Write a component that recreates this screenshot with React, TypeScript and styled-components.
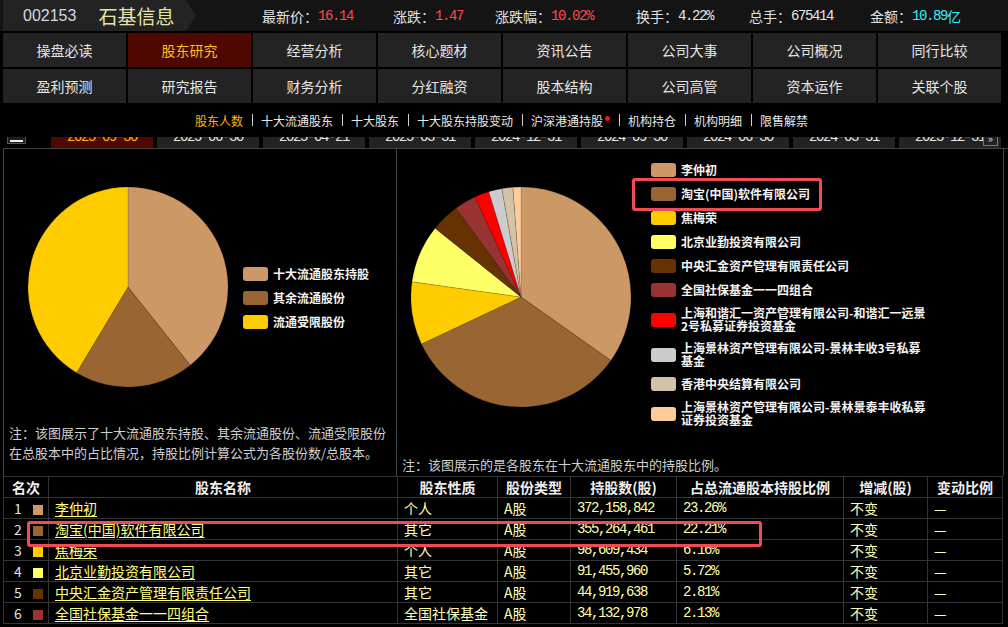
import React from "react";
import styled, { createGlobalStyle } from "styled-components";

const CJK = `"Noto Sans CJK SC", "Noto Sans", sans-serif`;
const MONO = `"Liberation Mono", "Noto Sans CJK SC", monospace`;

const GlobalStyle = createGlobalStyle`
  html, body { margin: 0; padding: 0; background: #000; }
  body { font-family: ${CJK}; color: #ddd; }
  * { box-sizing: border-box; }
`;

const Page = styled.div`
  position: relative;
  width: 1008px;
  height: 627px;
  overflow: hidden;
  background: #000;
`;

/* ---------- top bar ---------- */
const TopBar = styled.div`
  display: flex;
  align-items: center;
  height: 31px;
  margin-bottom: 2px;
  background: #141414;
`;
const Brand = styled.div`
  display: flex;
  align-items: center;
  width: 193px;
  height: 100%;
  margin-left: 3px;
  padding-left: 20px;
  background: #232323;
  clip-path: polygon(0 0, calc(100% - 10px) 0, 100% 50%, calc(100% - 10px) 100%, 0 100%);
`;
const Code = styled.span`
  font-family: "Liberation Sans", sans-serif;
  font-size: 16px;
  color: #d6d8e6;
`;
const StockName = styled.span`
  margin-left: 22px;
  font-size: 19px;
  color: #e9e3a6;
`;
const Stats = styled.div`
  display: flex;
  align-items: center;
  margin-left: 66px;
`;
const Stat = styled.div<{ $w: number }>`
  display: flex;
  align-items: center;
  width: ${(p) => p.$w}px;
  font-size: 14px;
  color: #e2e2e2;
  white-space: nowrap;
`;
const StatValue = styled.span<{ $c: string }>`
  font-family: ${MONO};
  font-size: 14px;
  letter-spacing: -1.4px;
  color: ${(p) => p.$c};
`;
const Yi = styled.span<{ $c: string }>`
  font-size: 14px;
  color: ${(p) => p.$c};
`;

/* ---------- nav grid ---------- */
const NavGrid = styled.div`
  display: grid;
  grid-template-columns: repeat(8, 123px);
  grid-auto-rows: 34px;
  gap: 2px;
  margin-left: 3px;
`;
const NavCell = styled.div<{ $active?: boolean }>`
  display: flex;
  align-items: center;
  justify-content: center;
  background: ${(p) => (p.$active ? "#4e0800" : "#232323")};
  color: ${(p) => (p.$active ? "#ffbf1a" : "#e6e6e6")};
  font-size: 14px;
`;

/* ---------- sub nav ---------- */
const SubNav = styled.div`
  display: flex;
  align-items: center;
  height: 34px;
  padding-left: 195px;
  font-size: 12px;
`;
const SubItem = styled.span<{ $active?: boolean }>`
  position: relative;
  color: ${(p) => (p.$active ? "#ffb400" : "#e8e8e8")};
`;
const Sep = styled.span`
  display: inline-block;
  width: 1px;
  height: 12px;
  margin: 0 8px 0 9px;
  background: #d0d0d0;
`;
const RedDot = styled.span`
  display: inline-block;
  width: 5px;
  height: 5px;
  margin-left: 2px;
  border-radius: 50%;
  background: #ff1010;
  vertical-align: 5px;
`;

/* ---------- date tabs (scrolled, partly clipped) ---------- */
const TabsClip = styled.div`
  position: relative;
  height: 11px;
  overflow: hidden;
`;
const TabsRow = styled.div`
  display: flex;
  align-items: flex-start;
  gap: 4px;
  height: 22px;
  margin-top: -11px;
  padding-left: 7px;
`;
const CollapseBtn = styled.div`
  position: relative;
  width: 19px;
  height: 18px;
  margin-right: 21px;
  background: #1e1e1e;
  border: 1px solid #555;
  &::after {
    content: "";
    position: absolute;
    left: 2px;
    right: 2px;
    top: 13px;
    height: 2px;
    background: #eee;
  }
`;
const DateTab = styled.div<{ $active?: boolean }>`
  flex: none;
  width: 102px;
  height: 22px;
  line-height: 22px;
  text-align: center;
  background: ${(p) => (p.$active ? "#4e0800" : "#232323")};
  color: ${(p) => (p.$active ? "#ffb400" : "#e6e6e6")};
  font-family: ${MONO};
  font-size: 14px;
  letter-spacing: -1.4px;
`;
const MoreBtn = styled.div`
  position: absolute;
  right: 10px;
  top: -4px;
  width: 15px;
  height: 13px;
  border: 1px solid #777;
  background: #222;
  color: #ddd;
  font-size: 11px;
  line-height: 9px;
  text-align: center;
`;

/* ---------- charts ---------- */
const Charts = styled.div`
  display: flex;
  height: 328px;
  margin-left: 3px;
  border-top: 1px solid #444;
`;
const Panel = styled.div<{ $w: number; $left?: boolean }>`
  display: flex;
  flex-direction: column;
  width: ${(p) => p.$w}px;
  border-right: 1px solid #444;
  border-left: ${(p) => (p.$left ? "1px solid #444" : "none")};
`;
const PieRow = styled.div`
  display: flex;
  align-items: flex-start;
`;
const PieBox = styled.svg<{ $ml: number }>`
  flex: none;
  margin-left: ${(p) => p.$ml}px;
  margin-top: 38px;
`;
const Legend = styled.div<{ $ml: number; $mt: number }>`
  display: flex;
  flex-direction: column;
  gap: 10px;
  margin-left: ${(p) => p.$ml}px;
  margin-top: ${(p) => p.$mt}px;
`;
const LegendItem = styled.div`
  display: flex;
  align-items: center;
`;
const Swatch = styled.span<{ $c: string }>`
  flex: none;
  width: 25px;
  height: 14px;
  border-radius: 3px;
  background: ${(p) => p.$c};
`;
const LegendText = styled.span`
  margin-left: 5px;
  font-size: 12px;
  line-height: 12.5px;
  font-weight: 700;
  color: #f4f4f4;
  text-shadow: 0 0 1px #000;
  white-space: nowrap;
`;
const Note = styled.div<{ $pb: number }>`
  margin-top: auto;
  padding: 0 0 ${(p) => p.$pb}px 5px;
  font-size: 13px;
  line-height: 20px;
  color: #cfcfcf;
  white-space: nowrap;
`;

/* ---------- table ---------- */
const Table = styled.table`
  border-collapse: collapse;
  table-layout: fixed;
  width: 999px;
  margin-left: 3px;
  font-size: 14px;
  th, td {
    border: 1px solid #343434;
    padding: 0 0 0 6px;
    height: 21px;
    line-height: 20px;
    white-space: nowrap;
    overflow: hidden;
    text-align: left;
  }
  th {
    padding: 0;
    text-align: center;
    font-weight: 700;
    color: #f0f0f0;
  }
`;
const RankCell = styled.td`
  color: #e0e0e0;
  && { padding-left: 10px; }
`;
const RankSwatch = styled.span<{ $c: string }>`
  display: inline-block;
  width: 10px;
  height: 10px;
  margin-left: 11px;
  vertical-align: -1px;
  background: ${(p) => p.$c};
`;
const NameLink = styled.a`
  color: #ffff80;
  text-decoration: underline;
  text-underline-offset: 2px;
`;
const PlainCell = styled.td`
  color: #ffffb8;
`;
const NumCell = styled.td`
  color: #ffffa8;
  font-family: ${MONO};
  letter-spacing: -1.4px;
`;

/* ---------- annotation overlays ---------- */
const Highlight = styled.div`
  position: absolute;
  border: 3px solid #f04b55;
  border-radius: 3px;
  pointer-events: none;
`;

/* ---------- data ---------- */
const stats = [
  { label: "最新价：", value: "16.14", color: "#ff4a4a", w: 131 },
  { label: "涨跌：", value: "1.47", color: "#ff4a4a", w: 102 },
  { label: "涨跌幅：", value: "10.02%", color: "#ff4a4a", w: 141 },
  { label: "换手：", value: "4.22%", color: "#e6e6e6", w: 113 },
  { label: "总手：", value: "675414", color: "#e6e6e6", w: 121 },
];

const navItems = [
  "操盘必读", "股东研究", "经营分析", "核心题材", "资讯公告", "公司大事", "公司概况", "同行比较",
  "盈利预测", "研究报告", "财务分析", "分红融资", "股本结构", "公司高管", "资本运作", "关联个股",
];

const subItems = ["股东人数", "十大流通股东", "十大股东", "十大股东持股变动", "沪深港通持股", "机构持仓", "机构明细", "限售解禁"];

const dates = [
  "2025-09-30", "2025-06-30", "2025-04-21", "2025-03-31", "2024-12-31",
  "2024-09-30", "2024-06-30", "2024-03-31", "2023-12-31",
];

const leftSlices = [
  { name: "十大流通股东持股", value: 39.3, color: "#cc9966" },
  { name: "其余流通股份", value: 19.3, color: "#996633" },
  { name: "流通受限股份", value: 41.4, color: "#ffcc00" },
];

const holders = [
  { lines: ["李仲初"], value: 23.26, color: "#cc9966" },
  { lines: ["淘宝(中国)软件有限公司"], value: 22.21, color: "#996633" },
  { lines: ["焦梅荣"], value: 6.16, color: "#ffcc00" },
  { lines: ["北京业勤投资有限公司"], value: 5.72, color: "#ffff66" },
  { lines: ["中央汇金资产管理有限责任公司"], value: 2.81, color: "#663300" },
  { lines: ["全国社保基金一一四组合"], value: 2.13, color: "#993333" },
  { lines: ["上海和谐汇一资产管理有限公司-和谐汇一远景", "2号私募证券投资基金"], value: 1.43, color: "#ff0000" },
  { lines: ["上海景林资产管理有限公司-景林丰收3号私募", "基金"], value: 1.3, color: "#cccccc" },
  { lines: ["香港中央结算有限公司"], value: 1.08, color: "#d3c3a8" },
  { lines: ["上海景林资产管理有限公司-景林景泰丰收私募", "证券投资基金"], value: 0.78, color: "#ffcc99" },
];

const rows = [
  { name: "李仲初", kind: "个人", type: "A股", shares: "372,158,842", pct: "23.26%", color: "#cc9966" },
  { name: "淘宝(中国)软件有限公司", kind: "其它", type: "A股", shares: "355,264,461", pct: "22.21%", color: "#996633" },
  { name: "焦梅荣", kind: "个人", type: "A股", shares: "98,609,434", pct: "6.16%", color: "#ffcc00" },
  { name: "北京业勤投资有限公司", kind: "其它", type: "A股", shares: "91,455,960", pct: "5.72%", color: "#ffff66" },
  { name: "中央汇金资产管理有限责任公司", kind: "其它", type: "A股", shares: "44,919,638", pct: "2.81%", color: "#663300" },
  { name: "全国社保基金一一四组合", kind: "全国社保基金", type: "A股", shares: "34,132,978", pct: "2.13%", color: "#993333" },
];

const columns = [
  { title: "名次", w: 45 },
  { title: "股东名称", w: 349 },
  { title: "股东性质", w: 100 },
  { title: "股份类型", w: 73 },
  { title: "持股数(股)", w: 106 },
  { title: "占总流通股本持股比例", w: 167 },
  { title: "增减(股)", w: 84 },
  { title: "变动比例", w: 75 },
];

function Pie({ data, size, ml }: { data: { value: number; color: string }[]; size: number; ml: number }) {
  const r = size / 2;
  const total = data.reduce((s, d) => s + d.value, 0);
  let acc = 0;
  const pt = (a: number) => [r + r * Math.sin(a), r - r * Math.cos(a)];
  return (
    <PieBox $ml={ml} width={size} height={size} viewBox={`0 0 ${size} ${size}`}>
      {data.map((d, i) => {
        const a0 = (acc / total) * Math.PI * 2;
        acc += d.value;
        const a1 = (acc / total) * Math.PI * 2;
        const [x0, y0] = pt(a0);
        const [x1, y1] = pt(a1);
        const large = a1 - a0 > Math.PI ? 1 : 0;
        return (
          <path
            key={i}
            d={`M${r},${r} L${x0},${y0} A${r},${r} 0 ${large} 1 ${x1},${y1} Z`}
            fill={d.color}
            stroke="rgba(60,40,20,0.35)"
            strokeWidth={0.5}
          />
        );
      })}
    </PieBox>
  );
}

export default function App() {
  return (
    <Page>
      <GlobalStyle />
      <TopBar>
        <Brand>
          <Code>002153</Code>
          <StockName>石基信息</StockName>
        </Brand>
        <Stats>
          {stats.map((s) => (
            <Stat key={s.label} $w={s.w}>
              {s.label}
              <StatValue $c={s.color}>{s.value}</StatValue>
            </Stat>
          ))}
          <Stat $w={120}>
            金额：<StatValue $c="#33f0ff">10.89</StatValue>
            <Yi $c="#33f0ff">亿</Yi>
          </Stat>
        </Stats>
      </TopBar>

      <NavGrid>
        {navItems.map((n) => (
          <NavCell key={n} $active={n === "股东研究"}>
            {n}
          </NavCell>
        ))}
      </NavGrid>

      <SubNav>
        {subItems.map((s, i) => (
          <React.Fragment key={s}>
            {i > 0 && <Sep />}
            <SubItem $active={i === 0}>
              {s}
              {s === "沪深港通持股" && <RedDot />}
            </SubItem>
          </React.Fragment>
        ))}
      </SubNav>

      <TabsClip>
        <TabsRow>
          <CollapseBtn />
          {dates.map((d, i) => (
            <DateTab key={d} $active={i === 0}>
              {d}
            </DateTab>
          ))}
        </TabsRow>
        <MoreBtn>»</MoreBtn>
      </TabsClip>

      <Charts>
        <Panel $w={394} $left>
          <PieRow>
            <Pie data={leftSlices} size={200} ml={24} />
            <Legend $ml={15} $mt={118}>
              {leftSlices.map((s) => (
                <LegendItem key={s.name}>
                  <Swatch $c={s.color} />
                  <LegendText>{s.name}</LegendText>
                </LegendItem>
              ))}
            </Legend>
          </PieRow>
          <Note $pb={13}>
            注：该图展示了十大流通股东持股、其余流通股份、流通受限股份
            <br />
            在总股本中的占比情况，持股比例计算公式为各股份数/总股本。
          </Note>
        </Panel>
        <Panel $w={607}>
          <PieRow>
            <Pie data={holders} size={220} ml={14} />
            <Legend $ml={20} $mt={14}>
              {holders.map((h) => (
                <LegendItem key={h.lines[0]}>
                  <Swatch $c={h.color} />
                  <LegendText>
                    {h.lines.map((l, i) => (
                      <React.Fragment key={l}>
                        {i > 0 && <br />}
                        {l}
                      </React.Fragment>
                    ))}
                  </LegendText>
                </LegendItem>
              ))}
            </Legend>
          </PieRow>
          <Note $pb={1}>注：该图展示的是各股东在十大流通股东中的持股比例。</Note>
        </Panel>
      </Charts>

      <Table>
        <colgroup>
          {columns.map((c) => (
            <col key={c.title} style={{ width: c.w }} />
          ))}
        </colgroup>
        <thead>
          <tr>
            {columns.map((c) => (
              <th key={c.title}>{c.title}</th>
            ))}
          </tr>
        </thead>
        <tbody>
          {rows.map((r, i) => (
            <tr key={r.name}>
              <RankCell>
                {i + 1}
                <RankSwatch $c={r.color} />
              </RankCell>
              <td>
                <NameLink>{r.name}</NameLink>
              </td>
              <PlainCell>{r.kind}</PlainCell>
              <PlainCell>{r.type}</PlainCell>
              <NumCell>{r.shares}</NumCell>
              <NumCell>{r.pct}</NumCell>
              <PlainCell>不变</PlainCell>
              <PlainCell>—</PlainCell>
            </tr>
          ))}
        </tbody>
      </Table>

      <Highlight style={{ left: 632, top: 178, width: 190, height: 33 }} />
      <Highlight style={{ left: 27, top: 521, width: 735, height: 26 }} />
    </Page>
  );
}
